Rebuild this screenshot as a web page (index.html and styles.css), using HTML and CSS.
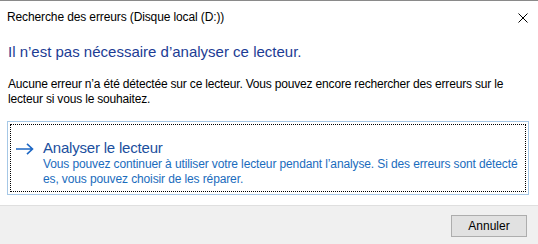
FILE: index.html
```html
<!DOCTYPE html>
<html lang="fr">
<head>
<meta charset="utf-8">
<title>Recherche des erreurs</title>
<link rel="stylesheet" href="styles.css">
</head>
<body>
<div class="window">
  <div class="titlebar">
    <span class="title">Recherche des erreurs (Disque local (D:))</span>
    <span class="close" aria-label="Fermer">
      <svg width="10" height="10" viewBox="0 0 10 10"><path d="M0.5 0.5 L9.5 9.5 M9.5 0.5 L0.5 9.5" stroke="#000" stroke-width="1" fill="none"/></svg>
    </span>
  </div>
  <div class="content">
    <h1 class="instruction">Il n’est pas nécessaire d’analyser ce lecteur.</h1>
    <p class="body">Aucune erreur n’a été détectée sur ce lecteur. Vous pouvez encore rechercher des erreurs sur le<br>lecteur si vous le souhaitez.</p>
    <div class="cmdlink">
      <div class="focus">
        <span class="arrow">
          <svg width="18" height="12" viewBox="0 0 18 12"><path d="M0 6 H16.5 M11 0.8 L16.5 6 L11 11.2" stroke="#1d67c4" stroke-width="1.6" fill="none"/></svg>
        </span>
        <div class="cmdtext">
          <div class="cmdtitle">Analyser le lecteur</div>
          <div class="cmdnote">Vous pouvez continuer à utiliser votre lecteur pendant l’analyse. Si des erreurs sont détecté<br>es, vous pouvez choisir de les réparer.</div>
        </div>
      </div>
    </div>
  </div>
  <div class="footer">
    <button class="btn">Annuler</button>
  </div>
</div>
</body>
</html>
```

FILE: styles.css
```css
html, body {
  margin: 0;
  padding: 0;
  background: #ffffff;
}
.window {
  width: 538px;
  height: 244px;
  box-sizing: border-box;
  border-top: 1px solid #8a8a8a;
  font-family: "Liberation Sans", Arial, sans-serif;
  font-size: 12px;
  color: #000;
  display: flex;
  flex-direction: column;
  overflow: hidden;
}
.titlebar {
  height: 31px;
  flex: none;
  display: flex;
  align-items: center;
  justify-content: space-between;
  padding: 0 10px 0 7px;
  box-sizing: border-box;
}
.title {
  font-size: 12px;
  line-height: 16px;
  margin-top: 1px;
  letter-spacing: -0.12px;
}
.close {
  display: flex;
  margin-top: 2px;
}
.content {
  flex: 1;
  padding: 0 9px 0 8px;
}
.instruction {
  margin: 9px 0 0 0;
  font-size: 15px;
  line-height: 22px;
  font-weight: normal;
  color: #1c3c94;
}
.body {
  margin: 14px 0 0 0;
  font-size: 12px;
  line-height: 15px;
  white-space: nowrap;
  letter-spacing: -0.18px;
}
.cmdlink {
  margin: 14px 0 0 -1px;
  width: 522px;
  height: 74px;
  box-sizing: border-box;
  border: 1px solid #a6c8e6;
  padding: 2px;
}
.focus {
  height: 100%;
  box-sizing: border-box;
  border: 1px dotted #000;
  display: flex;
  align-items: flex-start;
  padding: 13px 0 0 5px;
}
.arrow {
  display: flex;
  width: 18px;
  margin-top: 5px;
}
.cmdtext {
  margin-left: 9px;
}
.cmdtitle {
  font-size: 15px;
  line-height: 20px;
  color: #1b4f9e;
  letter-spacing: -0.2px;
}
.cmdnote {
  font-size: 12px;
  line-height: 15px;
  color: #1a6cbd;
  white-space: nowrap;
  margin-top: -1px;
  letter-spacing: -0.12px;
}
.footer {
  height: 39px;
  flex: none;
  box-sizing: border-box;
  background: #f0f0f0;
  border-top: 1px solid #dfdfdf;
  display: flex;
  justify-content: flex-end;
  align-items: flex-start;
  padding: 9px 11px 0 0;
}
.btn {
  width: 76px;
  height: 22px;
  box-sizing: border-box;
  border: 1px solid #adadad;
  background: #e1e1e1;
  font-family: "Liberation Sans", Arial, sans-serif;
  font-size: 12px;
  color: #000;
  padding: 0;
  margin: 0;
}
```
